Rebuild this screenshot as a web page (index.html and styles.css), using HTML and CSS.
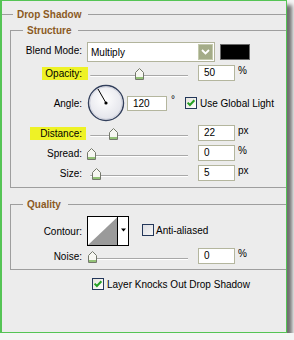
FILE: index.html
```html
<!DOCTYPE html>
<html>
<head>
<meta charset="utf-8">
<link rel="stylesheet" href="styles.css">
</head>
<body>
<div class="panel">
  <fieldset class="section">
    <legend class="title">Drop Shadow</legend>

    <fieldset class="group structure">
      <legend class="title">Structure</legend>

      <div class="row row-blend">
        <span class="label">Blend Mode:</span>
        <div class="select">
          <span class="select-text">Multiply</span>
          <span class="select-btn">
            <svg width="9" height="6" viewBox="0 0 9 6"><path d="M1 1 L4.5 4.5 L8 1" fill="none" stroke="#fff" stroke-width="1.8"/></svg>
          </span>
        </div>
        <span class="swatch"></span>
      </div>

      <div class="row">
        <span class="label"><span class="hl">Opacity:</span></span>
        <div class="slider">
          <div class="track"></div>
          <svg class="thumb" style="left:45px" width="9" height="12" viewBox="0 0 9 12"><path d="M0.5 4.5 L4.5 0.5 L8.5 4.5 V11.5 H0.5 Z" fill="#f7f7f2" stroke="#74786c"/><rect x="1" y="9" width="7" height="2" fill="#93c277"/></svg>
        </div>
        <span class="field">50</span>
        <span class="unit">%</span>
      </div>

      <div class="row row-angle">
        <span class="label">Angle:</span>
        <svg class="dial" width="38" height="38" viewBox="0 0 38 38">
          <defs>
            <radialGradient id="dg" cx="0.45" cy="0.4" r="0.6">
              <stop offset="0" stop-color="#ffffff"/>
              <stop offset="1" stop-color="#e2e3ea"/>
            </radialGradient>
          </defs>
          <circle cx="19" cy="19" r="17.5" fill="url(#dg)" stroke="#33405c" stroke-width="1.4"/>
          <circle cx="19" cy="19" r="16.2" fill="none" stroke="#c9ccd8" stroke-width="0.8"/>
          <line x1="19" y1="19" x2="11" y2="5" stroke="#000" stroke-width="1"/>
          <circle cx="19" cy="19" r="1.6" fill="#000"/>
        </svg>
        <span class="field field-angle">120</span>
        <span class="deg">°</span>
        <svg class="check" width="12" height="12" viewBox="0 0 12 12">
          <defs>
            <linearGradient id="cg" x1="0" y1="0" x2="1" y2="1">
              <stop offset="0" stop-color="#e4e3dc"/>
              <stop offset="1" stop-color="#ffffff"/>
            </linearGradient>
          </defs>
          <rect x="0.5" y="0.5" width="11" height="11" fill="url(#cg)" stroke="#23375a"/>
          <path d="M2.6 5.6 L4.9 8 L9.4 3.2" fill="none" stroke="#25a025" stroke-width="2"/>
        </svg>
        <span class="check-label">Use Global Light</span>
      </div>

      <div class="row">
        <span class="label"><span class="hl hl-wide">Distance:</span></span>
        <div class="slider">
          <div class="track"></div>
          <svg class="thumb" style="left:19px" width="9" height="12" viewBox="0 0 9 12"><path d="M0.5 4.5 L4.5 0.5 L8.5 4.5 V11.5 H0.5 Z" fill="#f7f7f2" stroke="#74786c"/><rect x="1" y="9" width="7" height="2" fill="#93c277"/></svg>
        </div>
        <span class="field">22</span>
        <span class="unit">px</span>
      </div>

      <div class="row">
        <span class="label">Spread:</span>
        <div class="slider">
          <div class="track"></div>
          <svg class="thumb" style="left:-3px" width="9" height="12" viewBox="0 0 9 12"><path d="M0.5 4.5 L4.5 0.5 L8.5 4.5 V11.5 H0.5 Z" fill="#f7f7f2" stroke="#74786c"/><rect x="1" y="9" width="7" height="2" fill="#93c277"/></svg>
        </div>
        <span class="field">0</span>
        <span class="unit">%</span>
      </div>

      <div class="row">
        <span class="label">Size:</span>
        <div class="slider">
          <div class="track"></div>
          <svg class="thumb" style="left:2px" width="9" height="12" viewBox="0 0 9 12"><path d="M0.5 4.5 L4.5 0.5 L8.5 4.5 V11.5 H0.5 Z" fill="#f7f7f2" stroke="#74786c"/><rect x="1" y="9" width="7" height="2" fill="#93c277"/></svg>
        </div>
        <span class="field">5</span>
        <span class="unit">px</span>
      </div>
    </fieldset>

    <fieldset class="group quality">
      <legend class="title">Quality</legend>

      <div class="row row-contour">
        <span class="label">Contour:</span>
        <svg class="contour" width="42" height="30" viewBox="0 0 42 30">
          <rect x="0.5" y="0.5" width="41" height="29" fill="#fff" stroke="#000"/>
          <polygon points="1,29 30.5,1 30.5,29" fill="#9a9a9a"/>
          <line x1="30.5" y1="0.5" x2="30.5" y2="29.5" stroke="#000"/>
          <polygon points="34,12.5 39,12.5 36.5,15.5" fill="#000"/>
        </svg>
        <svg class="check check-aa" width="12" height="12" viewBox="0 0 12 12">
          <defs>
            <linearGradient id="ug" x1="0" y1="0" x2="1" y2="1">
              <stop offset="0" stop-color="#dcdde2"/>
              <stop offset="1" stop-color="#f6f6f6"/>
            </linearGradient>
          </defs>
          <rect x="0.5" y="0.5" width="11" height="11" fill="url(#ug)" stroke="#23375a"/>
        </svg>
        <span class="check-label check-label-aa">Anti-aliased</span>
      </div>

      <div class="row row-noise">
        <span class="label">Noise:</span>
        <div class="slider">
          <div class="track"></div>
          <svg class="thumb" style="left:-2px" width="9" height="12" viewBox="0 0 9 12"><path d="M0.5 4.5 L4.5 0.5 L8.5 4.5 V11.5 H0.5 Z" fill="#f7f7f2" stroke="#74786c"/><rect x="1" y="9" width="7" height="2" fill="#93c277"/></svg>
        </div>
        <span class="field">0</span>
        <span class="unit">%</span>
      </div>
    </fieldset>

    <div class="row row-knock">
      <svg class="check" width="12" height="12" viewBox="0 0 12 12">
        <rect x="0.5" y="0.5" width="11" height="11" fill="url(#cg)" stroke="#23375a"/>
        <path d="M2.6 5.6 L4.9 8 L9.4 3.2" fill="none" stroke="#25a025" stroke-width="2"/>
      </svg>
      <span class="check-label">Layer Knocks Out Drop Shadow</span>
    </div>
  </fieldset>
</div>
</body>
</html>
```

FILE: styles.css
```css
* {
  box-sizing: border-box;
}

body {
  margin: 0;
  background: #f4f4f4;
  font-family: "Liberation Sans", Arial, sans-serif;
  font-size: 10px;
  color: #000;
}

.panel {
  width: 287px;
  height: 333px;
  background: #ececec;
  border: 1px solid #55c455;
  border-left-width: 2px;
  overflow: hidden;
  box-shadow: 5px 5px 4px rgba(0, 0, 0, 0.55);
}

fieldset {
  margin: 0;
  padding: 0;
  min-width: 0;
}

.title {
  font-weight: bold;
  color: #8b5a1f;
  line-height: 11px;
  padding: 0 7px 0 4px;
}

.section {
  margin-top: 8px;
  border: 0;
  border-top: 1px solid #9e9e9e;
  padding: 0 0 0 8px;
}

.section > .title {
  margin-left: 3px;
}

.group {
  border: 1px solid #9e9e9e;
  margin-right: -20px;
}

.group > .title {
  margin-left: 12px;
}

.structure {
  margin-top: 5px;
  padding: 6px 0 4px 0;
}

.quality {
  margin-top: 11px;
  padding: 6px 0 3px 0;
}

.row {
  display: flex;
  align-items: center;
  height: 20px;
}

.row + .row {
  margin-top: 0;
}

.label {
  width: 71px;
  flex: none;
  text-align: right;
  white-space: nowrap;
}

.hl {
  background: #eef226;
  padding: 1px 6px 1px 3px;
  margin-right: -6px;
}

.hl-wide {
  padding: 1px 4px 1px 10px;
  margin-right: -4px;
}

/* blend mode */
.row-blend {
  margin-bottom: 1px;
}

.row-blend .label {
  padding-bottom: 3px;
}

.select {
  display: flex;
  width: 128px;
  height: 20px;
  margin-left: 5px;
  border: 1px solid #b2b49c;
  background: #fff;
  flex: none;
}

.select-text {
  flex: 1;
  padding: 2px 0 0 3px;
  line-height: 16px;
}

.select-btn {
  width: 15px;
  margin: 1px 1px 1px 0;
  background: #a4ac88;
  border: 1px solid #c4caad;
  display: flex;
  align-items: center;
  justify-content: center;
}

.swatch {
  width: 30px;
  height: 16px;
  margin-left: 5px;
  background: #000;
  border: 1px solid #6a6a6a;
  flex: none;
}

/* sliders */
.slider {
  position: relative;
  width: 98px;
  height: 20px;
  margin-left: 8px;
  flex: none;
}

.track {
  margin-top: 12px;
  height: 2px;
  border-top: 1px solid #a8a8a8;
  background: #fff;
  border-radius: 1px 0 0 1px;
}

.thumb {
  position: absolute;
  top: 5px;
  display: block;
}

.field {
  width: 37px;
  height: 16px;
  margin-left: 10px;
  padding-left: 5px;
  background: #fff;
  border: 1px solid #b4b69e;
  line-height: 14px;
  flex: none;
}

.unit {
  align-self: flex-start;
  margin-top: 2px;
  margin-left: 3px;
  line-height: 12px;
}

/* angle */
.row-angle {
  height: 40px;
  margin-top: 1px;
}

.dial {
  margin-left: 5px;
  flex: none;
  display: block;
}

.field-angle {
  width: 40px;
  height: 15px;
  margin-left: 2px;
  line-height: 13px;
}

.deg {
  align-self: flex-start;
  margin-top: 11px;
  margin-left: 4px;
  line-height: 12px;
}

.check {
  flex: none;
  display: block;
  margin-left: 10px;
}

.check-label {
  margin-left: 3px;
  white-space: nowrap;
}

/* quality */
.row-contour {
  height: 30px;
}

.contour {
  margin-left: 5px;
  flex: none;
  display: block;
}

.check-aa {
  margin-left: 13px;
  margin-top: -2px;
}

.check-label-aa {
  margin-left: 2px;
  margin-top: -2px;
}

.row-noise {
  margin-top: 3px;
}

.row-knock {
  height: 12px;
  margin-top: 8px;
  padding-left: 72px;
}
```
